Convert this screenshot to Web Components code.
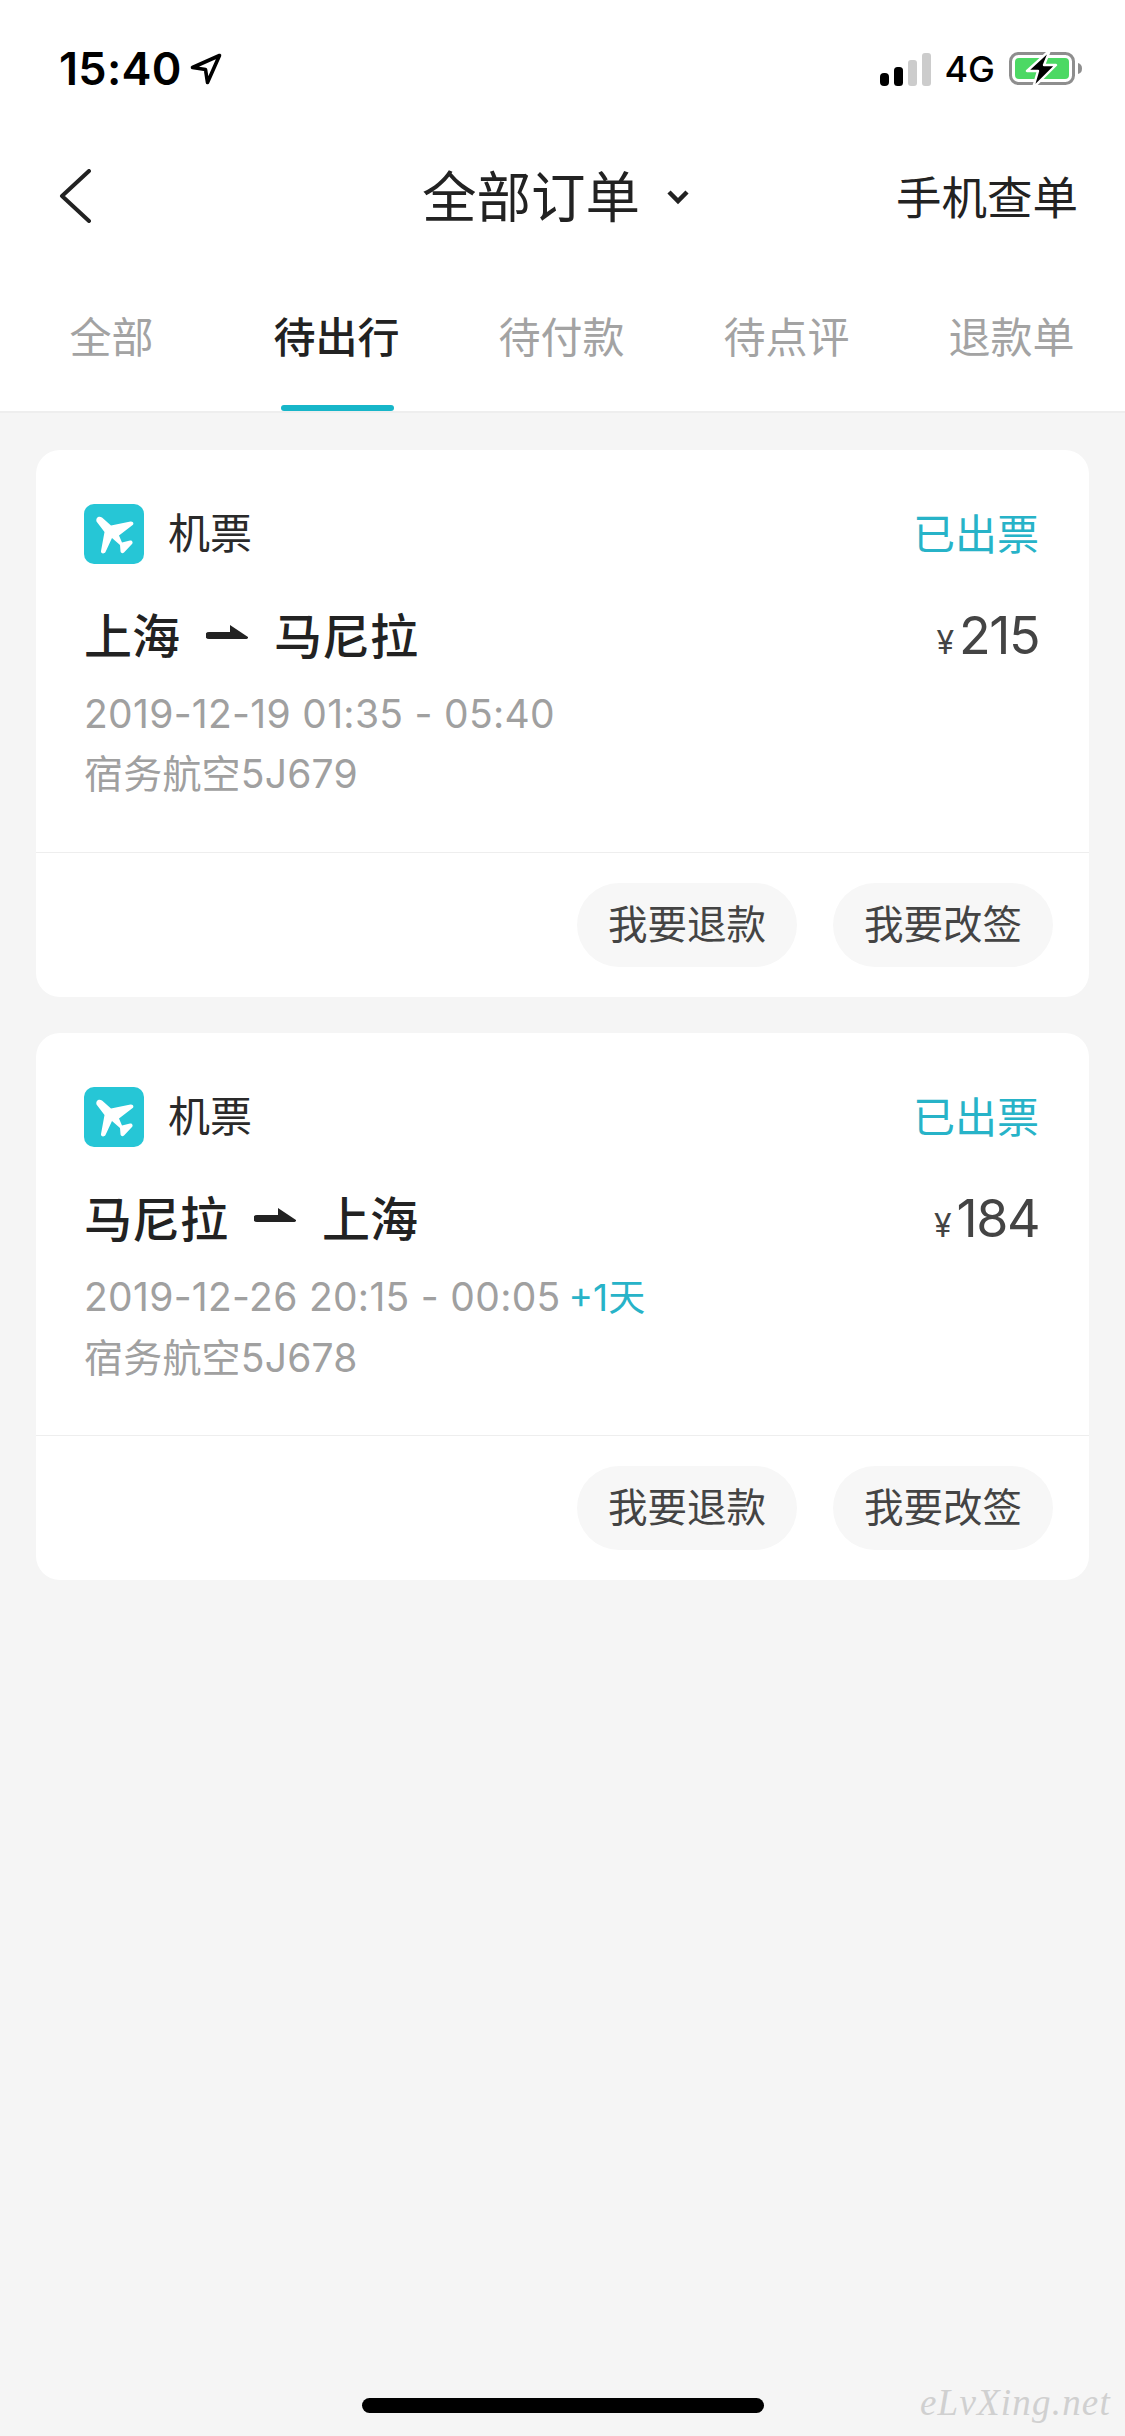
<!doctype html>
<html lang="zh-CN"><head><meta charset="utf-8"><title>全部订单</title>
<style>
html,body{margin:0;padding:0;background:#f5f5f5}
body{font-family:Inter,"Noto Sans CJK SC",sans-serif;width:1125px}
</style></head><body>
<app-shell>
  <status-bar time="15:40" net="4G"></status-bar>
  <nav-bar title="全部订单" action="手机查单"></nav-bar>
  <order-tabs items="全部,待出行,待付款,待点评,退款单" active="1"></order-tabs>
  <order-list>
    <order-card status="已出票" from="上海" to="马尼拉" price="215" date="2019-12-19 01:35 - 05:40" flight="宿务航空5J679">
      <pill-button>我要退款</pill-button><pill-button>我要改签</pill-button>
    </order-card>
    <order-card status="已出票" from="马尼拉" to="上海" price="184" date="2019-12-26 20:15 - 00:05" extra="+1天" flight="宿务航空5J678">
      <pill-button>我要退款</pill-button><pill-button>我要改签</pill-button>
    </order-card>
  </order-list>
</app-shell>
<script>
const FONT='Inter,"Noto Sans CJK SC",sans-serif';
function def(name,render){customElements.define(name,class extends HTMLElement{connectedCallback(){if(this.shadowRoot)return;const r=this.attachShadow({mode:'open'});r.innerHTML=render(this);}});}

def('app-shell',()=>`<style>
:host{display:block;position:relative;width:1125px;height:2436px;overflow:hidden;background:#f5f5f5;font-family:${FONT}}
.home{position:absolute;left:362px;top:2398px;width:402px;height:15px;border-radius:8px;background:#000}
.mark{position:absolute;left:920px;top:2378px;font:italic 400 37px/50px "Liberation Serif",serif;color:#d0d0d0;letter-spacing:1.200px;white-space:nowrap}
</style><slot></slot><div class="home"></div><div class="mark">eLvXing.net</div>`);

def('status-bar',h=>`<style>
:host{display:flex;align-items:center;justify-content:space-between;box-sizing:border-box;height:138px;padding:0 43px 0 59px;background:#fff;color:#000}
.l,.r{display:flex;align-items:center}
.t{font:600 45px/50px Inter,sans-serif;letter-spacing:.3px}
.a{margin-left:8px;display:block}
.net{font:500 36px/40px Inter,sans-serif;margin:0 14px 0 13px}
svg{display:block}
</style><div class="l"><span class="t">${h.getAttribute('time')}</span>
<svg class="a" width="32" height="32" viewBox="0 0 32 32"><path d="M29.500 2.500 L2.500 14.500 L15.500 16.500 L17.500 29.500 Z" fill="none" stroke="#000" stroke-width="3.600" stroke-linejoin="round"/></svg></div>
<div class="r"><svg width="51" height="34" viewBox="0 0 51 34"><rect x="0" y="21" width="9" height="13" rx="4" fill="#000"/><rect x="14" y="15" width="9" height="19" rx="3.500" fill="#000"/><rect x="28" y="8" width="9" height="26" rx="3" fill="#ccc"/><rect x="42" y="1" width="9" height="33" rx="3" fill="#ccc"/></svg>
<span class="net">${h.getAttribute('net')}</span>
<svg width="73" height="36" viewBox="0 0 73 36"><rect x="1.500" y="2.500" width="63" height="30" rx="8" fill="none" stroke="#8e8e8e" stroke-width="3"/><rect x="6" y="7" width="54" height="21" rx="4" fill="#4cd964"/><path d="M69 12 q4 1 4 5.500 q0 4.500 -4 5.500z" fill="#8e8e8e"/><path d="M41 -1 L18 20 H29 L24 37 L47 14 H35 Z" fill="#000" stroke="#fff" stroke-width="2.400" stroke-linejoin="round"/></svg></div>`);

def('nav-bar',h=>`<style>
:host{display:flex;align-items:center;justify-content:space-between;box-sizing:border-box;height:116px;padding:0 47px 0 59px;background:#fff;color:#222;position:relative}
.c{display:flex;align-items:center;position:absolute;left:422px;top:-2px;height:100%}
.title{font:400 54.500px/70px "Noto Sans CJK SC",sans-serif}
.dn{margin-left:26px;display:block;margin-top:6px}
.act{font:400 45.500px/60px "Noto Sans CJK SC",sans-serif;margin-top:-2px}
svg{display:block}
</style><svg width="34" height="54" viewBox="0 0 34 54"><path d="M31 2 L4 27 L31 52" fill="none" stroke="#222" stroke-width="4" stroke-linecap="round" stroke-linejoin="round" transform="translate(-1 0)"/></svg>
<div class="c"><span class="title">${h.getAttribute('title')}</span><svg class="dn" width="24" height="16" viewBox="0 0 24 16"><path d="M3 3 L12 12 L21 3" fill="none" stroke="#222" stroke-width="4.500"/></svg></div>
<span class="act">${h.getAttribute('action')}</span>`);

def('order-tabs',h=>{const a=+h.getAttribute('active');return `<style>
:host{display:flex;box-sizing:border-box;height:159px;background:#fff;border-bottom:2px solid #eee}
.tab{flex:1;display:flex;flex-direction:column;align-items:center;padding-top:51px;font:400 42px/60px "Noto Sans CJK SC",sans-serif;color:#a3a3a3}
.tab.on{color:#222;font-weight:500}
.tab span{margin-left:-2px}
.tab i{display:block;margin-top:40px;height:6px;width:113px;border-radius:3px;background:transparent}
.tab.on i{background:#17b6c9}
</style>`+h.getAttribute('items').split(',').map((t,i)=>`<div class="tab${i===a?' on':''}"><span>${t}</span><i></i></div>`).join('')});

def('order-list',()=>`<style>:host{display:flex;flex-direction:column;gap:36px;padding:37px 36px 0 36px}</style><slot></slot>`);

const PLANE=`<svg width="60" height="60" viewBox="0 0 60 60"><rect width="60" height="60" rx="10" fill="#26c6d6"/><path d="M12.500 17.500 C11.500 13.500 15 11.500 18 13.500 L27 21.500 L46.500 17.500 C49.500 17 50.500 20.500 48 21.500 L35 31.500 L38 38.500 L46 36.500 C48 36 49.500 38.500 48 40 L40 48.500 C38.500 50 36.500 49 36.500 47 L36 41 L28 34 L21.500 48 C20 50.500 16.500 49.500 17 47 L20.500 28 Z" fill="#fff"/></svg>`;
const ARROW=`<svg width="42" height="17" viewBox="0 0 42 17"><path d="M24 0 L42 12 Q42.500 13.500 40.500 14 L3 14 A3.500 3.500 0 0 1 3 7 L24 7 Z" fill="#222"/></svg>`;

def('order-card',h=>{const g=k=>h.getAttribute(k)||'';return `<style>
:host{display:block;background:#fff;border-radius:24px;overflow:hidden;color:#222}
.body{box-sizing:border-box;height:402px;padding:54px 50px 0 48px}
.head,.route{display:flex;align-items:center;justify-content:space-between}
.head{height:60px}
.kind{display:flex;align-items:center;gap:24px;font:400 42px/60px "Noto Sans CJK SC",sans-serif;color:#2a2a2a}
.kind span,.st{position:relative;top:-3px}
.st{font:400 42px/60px "Noto Sans CJK SC",sans-serif;color:#27b3c8;top:-2px}
svg{display:block}
.route{height:70px;margin-top:34px}
.cities{display:flex;align-items:center;font:500 48px/70px "Noto Sans CJK SC",sans-serif;color:#222}
.cities svg{margin:0 26px 0 26px}
.price{font:400 52px/70px Inter,sans-serif;color:#444;letter-spacing:-1.500px;margin-top:6px}
.price small{font:400 32px/30px Inter,sans-serif;margin-right:5px;letter-spacing:0}
.date{margin:16px 0 0 0;font:400 39px/60px Inter,sans-serif;color:#a0a0a0;white-space:nowrap;letter-spacing:.3px}
.date b{font:400 37px/60px Inter,"Noto Sans CJK SC",sans-serif;color:#27b3c8;margin-left:8px;letter-spacing:0}
.fl{font:400 39px/60px Inter,"Noto Sans CJK SC",sans-serif;color:#a0a0a0;letter-spacing:.2px}
.foot{box-sizing:border-box;height:145px;border-top:1.500px solid #eee;padding:30px 36px 0 0;display:flex;justify-content:flex-end;gap:36px}
</style><div class="body">
<div class="head"><div class="kind">${PLANE}<span>机票</span></div><span class="st">${g('status')}</span></div>
<div class="route"><div class="cities"><span>${g('from')}</span>${ARROW}<span>${g('to')}</span></div><div class="price"><small>¥</small>${g('price')}</div></div>
<div class="date">${g('date')}${g('extra')?`<b>${g('extra')}</b>`:''}</div>
<div class="fl">${g('flight')}</div></div>
<div class="foot"><slot></slot></div>`});

def('pill-button',()=>`<style>
:host{display:flex;align-items:center;justify-content:center;box-sizing:border-box;width:220px;height:84px;padding-bottom:6px;border-radius:42px;background:#f7f7f7;color:#444;font:400 39.500px/50px "Noto Sans CJK SC",sans-serif}
</style><slot></slot>`);
</script>
</body></html>
